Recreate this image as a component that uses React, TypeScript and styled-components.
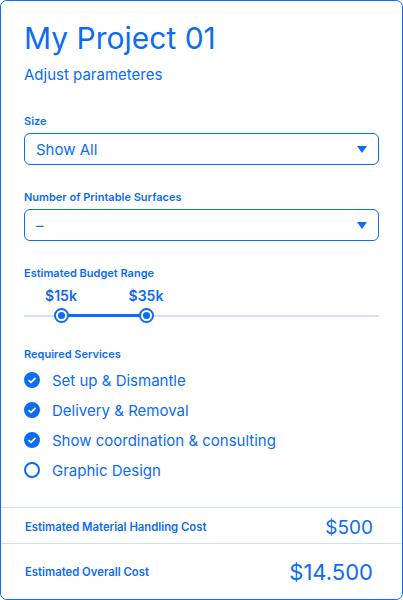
import React from 'react';
import styled, { createGlobalStyle } from 'styled-components';

const BLUE = '#0b6cf4';
const LIGHT = '#cfe0fb';

const GlobalStyle = createGlobalStyle`
  html, body {
    margin: 0;
    padding: 0;
    background: #fff;
  }
  body {
    font-family: Inter, "Noto Sans", sans-serif;
    color: ${BLUE};
  }
`;

const Card = styled.div`
  box-sizing: border-box;
  width: 403px;
  height: 600px;
  border: 1px solid ${BLUE};
  border-radius: 7px;
  display: flex;
  flex-direction: column;
  overflow: hidden;
`;

const Body = styled.div`
  padding: 19px 23px 0 23px;
  flex: 1;
`;

const Title = styled.h1`
  margin: 0;
  font-size: 30px;
  font-weight: 400;
  line-height: 36px;
`;

const Subtitle = styled.p`
  margin: 10px 0 0;
  font-size: 15px;
  line-height: 18px;
`;

const Field = styled.div<{ $top: number }>`
  margin-top: ${(p) => p.$top}px;
`;

const Label = styled.div`
  font-size: 11px;
  font-weight: 600;
  line-height: 14px;
`;

const Select = styled.div`
  margin-top: 5px;
  box-sizing: border-box;
  height: 32px;
  border: 1px solid ${BLUE};
  border-radius: 6px;
  display: flex;
  align-items: center;
  justify-content: space-between;
  padding: 0 11px 0 11px;
  font-size: 15px;
`;

const Caret = styled.span`
  width: 0;
  height: 0;
  border-left: 5px solid transparent;
  border-right: 5px solid transparent;
  border-top: 7px solid ${BLUE};
  margin-top: 1px;
`;

const SliderWrap = styled.div`
  position: relative;
  height: 43px;
`;

const Track = styled.div`
  position: absolute;
  left: 0;
  right: 0;
  top: 35px;
  height: 2px;
  background: ${LIGHT};
`;

const Range = styled.div`
  position: absolute;
  top: 34px;
  height: 3px;
  background: ${BLUE};
`;

const Thumb = styled.div`
  position: absolute;
  top: 28px;
  width: 15px;
  height: 15px;
  box-sizing: border-box;
  margin-left: -7.5px;
  border-radius: 50%;
  border: 2px solid ${BLUE};
  background: #fff;
  display: flex;
  align-items: center;
  justify-content: center;
  &::after {
    content: '';
    width: 7px;
    height: 7px;
    border-radius: 50%;
    background: ${BLUE};
  }
`;

const ThumbValue = styled.div`
  position: absolute;
  top: 7px;
  transform: translateX(-50%);
  font-size: 14px;
  font-weight: 600;
  white-space: nowrap;
`;

const Checks = styled.ul`
  list-style: none;
  margin: 4px 0 0;
  padding: 0;
`;

const CheckRow = styled.li`
  display: flex;
  align-items: center;
  height: 30px;
  font-size: 15px;
  gap: 12px;
`;

const Circle = styled.span<{ $on: boolean }>`
  width: 16px;
  height: 16px;
  box-sizing: border-box;
  border-radius: 50%;
  border: 2px solid ${BLUE};
  background: ${(p) => (p.$on ? BLUE : '#fff')};
  display: flex;
  align-items: center;
  justify-content: center;
`;

const CostRow = styled.div<{ $h: number; $shift: number }>`
  box-sizing: border-box;
  height: ${(p) => p.$h}px;
  padding: ${(p) => p.$shift}px 29px 0 24px;
  border-top: 1px solid ${LIGHT};
  display: flex;
  align-items: center;
  justify-content: space-between;
`;

const CostLabel = styled.span`
  font-size: 11.3px;
  font-weight: 600;
`;

const CostValue = styled.span<{ $size: number }>`
  font-size: ${(p) => p.$size}px;
  font-weight: 400;
`;

const services = [
  { name: 'Set up & Dismantle', on: true },
  { name: 'Delivery & Removal', on: true },
  { name: 'Show coordination & consulting', on: true },
  { name: 'Graphic Design', on: false },
];

const Check = () => (
  <svg width="8" height="7" viewBox="0 0 8 7">
    <path d="M1 3.6 L3 5.4 L7 1.4" fill="none" stroke="#fff" strokeWidth="1.7" strokeLinecap="round" strokeLinejoin="round" />
  </svg>
);

const App: React.FC = () => (
  <>
    <GlobalStyle />
    <Card>
      <Body>
        <Title>My Project 01</Title>
        <Subtitle>Adjust parameteres</Subtitle>

        <Field $top={30}>
          <Label>Size</Label>
          <Select>
            <span>Show All</span>
            <Caret />
          </Select>
        </Field>

        <Field $top={25}>
          <Label>Number of Printable Surfaces</Label>
          <Select>
            <span>–</span>
            <Caret />
          </Select>
        </Field>

        <Field $top={25}>
          <Label>Estimated Budget Range</Label>
          <SliderWrap>
            <Track />
            <Range style={{ left: 37, width: 85 }} />
            <Thumb style={{ left: 37 }} />
            <Thumb style={{ left: 122 }} />
            <ThumbValue style={{ left: 37 }}>$15k</ThumbValue>
            <ThumbValue style={{ left: 122 }}>$35k</ThumbValue>
          </SliderWrap>
        </Field>

        <Field $top={24}>
          <Label>Required Services</Label>
          <Checks>
            {services.map((s) => (
              <CheckRow key={s.name}>
                <Circle $on={s.on}>{s.on && <Check />}</Circle>
                <span>{s.name}</span>
              </CheckRow>
            ))}
          </Checks>
        </Field>
      </Body>
      <CostRow $h={36} $shift={3}>
        <CostLabel>Estimated Material Handling Cost</CostLabel>
        <CostValue $size={19}>$500</CostValue>
      </CostRow>
      <CostRow $h={56} $shift={0}>
        <CostLabel>Estimated Overall Cost</CostLabel>
        <CostValue $size={22}>$14.500</CostValue>
      </CostRow>
    </Card>
  </>
);

export default App;
